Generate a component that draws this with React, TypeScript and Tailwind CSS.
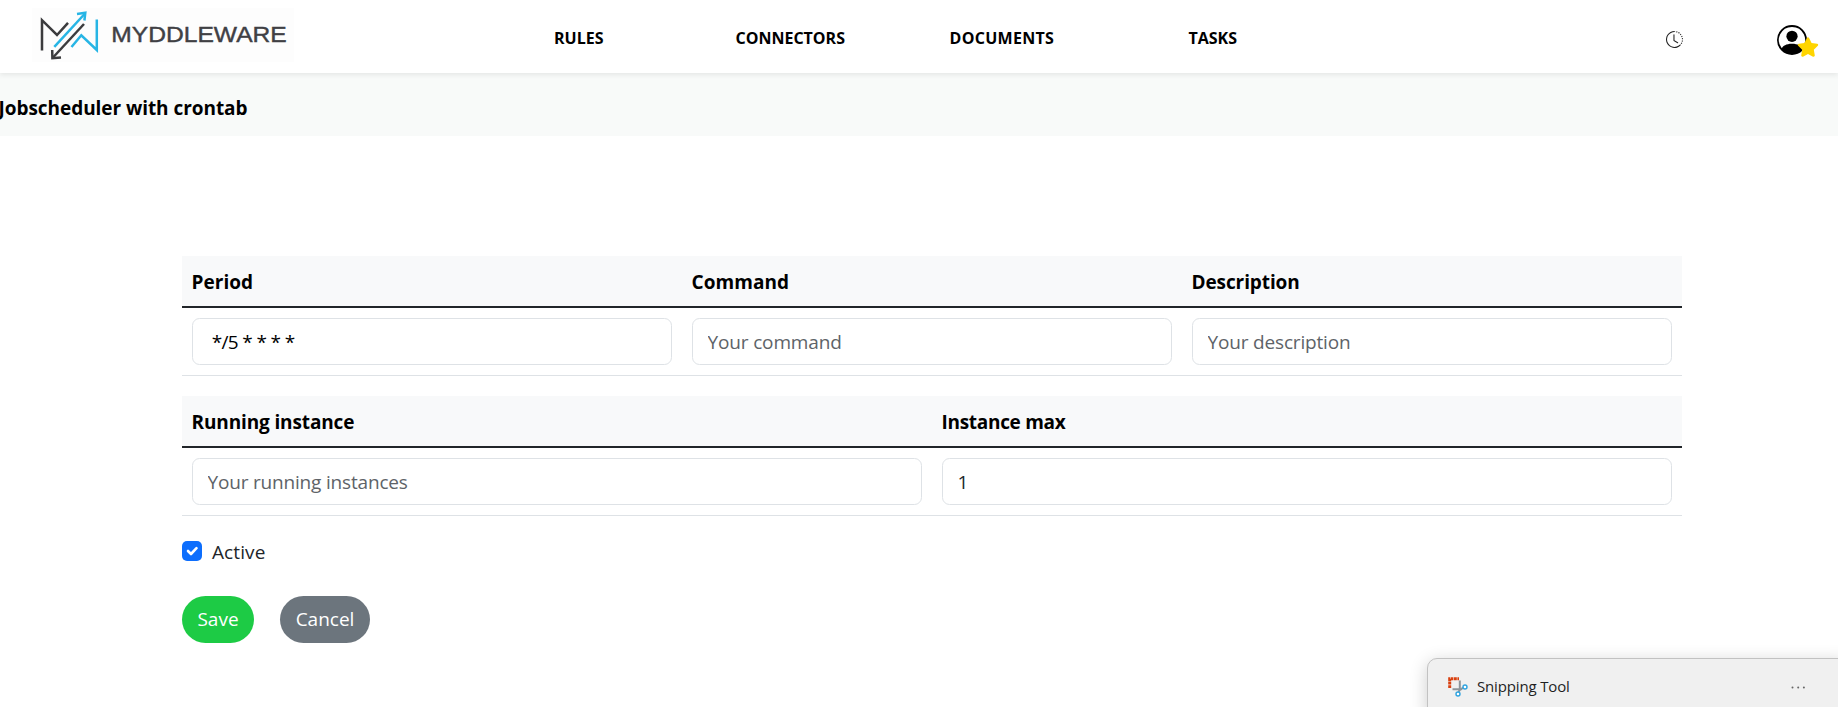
import React from "react";
import { BsClockHistory, BsPersonCircle } from "react-icons/bs";
import { FaStar } from "react-icons/fa";

function Logo() {
  return (
    <svg width="262" height="54" viewBox="32 8 262 54" className="ml-8 mt-2 shrink-0 bg-[#fdfdfd]">
      <g fill="none" strokeWidth="2.5">
        <g stroke="#3c3c3e">
          <path d="M42 50.5V20.2L57 35L68 22.8" />
          <path d="M84 24L53 57.5" />
          <path d="M52.2 50L52.4 58.2L61 57.4" />
        </g>
        <g stroke="#27b5e5">
          <path d="M54.3 46.8L85 13.5" />
          <path d="M77 14L85.3 12.8L84.4 20.5" />
          <path d="M71.5 47L81.3 35.3L96.8 50V19.5" />
        </g>
      </g>
      <text
        x="111.3"
        y="41.6"
        textLength="175.5"
        lengthAdjust="spacingAndGlyphs"
        strokeWidth="0.4"
        className="fill-[#404044] stroke-[#404044] font-['Liberation_Sans',sans-serif] text-[21.5px]"
      >
        MYDDLEWARE
      </text>
    </svg>
  );
}

function SnipIcon() {
  return (
    <svg width="20" height="20" viewBox="0 0 20 20" className="shrink-0">
      <path d="M11.8 3.5v9.7L10.4 15M4.5 12.2h8.7L15 10.6" stroke="#8d9499" strokeWidth="2" fill="none" />
      <path d="M1.7 11V1.7H11" stroke="#d9400f" strokeWidth="3" strokeDasharray="2.8 .6" fill="none" />
      <circle cx="17" cy="10" r="2" fill="#fff" stroke="#2ea3e0" strokeWidth="1.4" />
      <circle cx="10" cy="17" r="2" fill="#fff" stroke="#2ea3e0" strokeWidth="1.4" />
    </svg>
  );
}

type Column = {
  label: string;
  labelClass: string;
  inputClass: string;
  placeholder?: string;
  value?: string;
};

function FieldTable({ columns, gridClass }: { columns: Column[]; gridClass: string }) {
  return (
    <div className="border-b border-[#dee2e6]">
      <div className={`grid h-[52px] border-b-2 border-[#212529] bg-[#f8f9fa] ${gridClass}`}>
        {columns.map((c) => (
          <div key={c.label} className={`pr-2.5 pl-[9.5px] pt-px font-bold leading-[50px] text-black ${c.labelClass}`}>
            {c.label}
          </div>
        ))}
      </div>
      <div className={`grid ${gridClass}`}>
        {columns.map((c) => (
          <div key={c.label} className="p-2.5">
            <input
              className={`block h-[47px] w-full rounded-[7.5px] border border-[#dee2e6] bg-white px-[14.5px] text-[#212529] outline-none placeholder:text-[#5e6368] ${c.inputClass}`}
              placeholder={c.placeholder}
              defaultValue={c.value}
            />
          </div>
        ))}
      </div>
    </div>
  );
}

export default function App() {
  return (
    <div className="relative h-[707px] overflow-hidden bg-white font-['Open_Sans',sans-serif] text-[19px] text-[#212529]">
      <header className="relative z-10 flex h-[73px] bg-white shadow-[0_2px_5px_rgba(0,0,0,0.08)]">
        <Logo />
        <nav className="flex items-center pt-[3px] pl-[260px] text-base font-bold text-black">
          <a className="w-[181.5px]">RULES</a>
          <a className="w-[214px]">CONNECTORS</a>
          <a className="w-[239px] tracking-[0.3px]">DOCUMENTS</a>
          <a className="w-[60px]">TASKS</a>
        </nav>
        <div className="ml-auto flex items-start pr-[19px] text-black">
          <BsClockHistory className="mt-[31px] mr-[94px] size-[17px] text-[#222]" />
          <div className="relative mt-[25px] mr-3 size-[30px]">
            <BsPersonCircle className="size-[30px]" />
            <FaStar className="absolute top-[11px] left-[20px] size-[22px] text-[#ffd500]" />
          </div>
        </div>
      </header>

      <div className="h-[63px] bg-[#f8faf9] pt-[5px]">
        <h1 className="-ml-[1.5px] font-bold leading-[60px] tracking-[-0.05px] text-black">Jobscheduler with crontab</h1>
      </div>

      <main className="ml-[182px] w-[1500px] pt-[120px]">
        <FieldTable
          gridClass="grid-cols-3"
          columns={[
            { label: "Period", labelClass: "tracking-[0.05px]", value: " */5 * * * *", inputClass: "whitespace-pre tracking-[-0.7px] [word-spacing:0.1px] text-black" },
            { label: "Command", labelClass: "tracking-[0.05px]", placeholder: "Your command", inputClass: "tracking-[-0.15px]" },
            { label: "Description", labelClass: "tracking-[-0.1px]", placeholder: "Your description", inputClass: "tracking-[-0.17px]" },
          ]}
        />
        <div className="h-5" />
        <FieldTable
          gridClass="grid-cols-2"
          columns={[
            { label: "Running instance", labelClass: "tracking-[-0.13px]", placeholder: "Your running instances", inputClass: "tracking-[-0.18px]" },
            { label: "Instance max", labelClass: "tracking-[-0.3px]", value: "1", inputClass: "" },
          ]}
        />

        <label className="mt-5 flex h-[30px] items-center gap-2.5 tracking-[0.1px]">
          <span className="flex size-5 items-center justify-center rounded-[5px] bg-[#0d6efd]">
            <svg width="20" height="20" viewBox="0 0 20 20">
              <path d="m6 10 3 3 5.5-5.8" fill="none" stroke="#fff" strokeWidth="2.6" strokeLinecap="round" strokeLinejoin="round" />
            </svg>
          </span>
          <span className="pt-0.5">Active</span>
        </label>

        <div className="mt-[30px] flex gap-[26px] text-white">
          <button className="h-[47px] w-[72px] rounded-full bg-[#1dcb45]">Save</button>
          <button className="h-[47px] w-[90px] rounded-full bg-[#6c757d]">Cancel</button>
        </div>
      </main>

      <div className="absolute top-[658px] left-[1427px] flex h-[60px] w-[420px] items-start rounded-tl-[10px] border border-[#c2c2c2] bg-[#f0f0f0] shadow-[0_4px_18px_rgba(0,0,0,0.2)]">
        <div className="mt-[18px] ml-5">
          <SnipIcon />
        </div>
        <span className="mt-4 ml-[9px] text-[15px] leading-[22px] tracking-[-0.15px] text-[#1f1f1f]">Snipping Tool</span>
        <svg width="15" height="3" viewBox="0 0 15 3" className="mt-[27px] ml-[221px]" fill="#666">
          <circle cx="1.5" cy="1.5" r="1" />
          <circle cx="7.2" cy="1.5" r="1" />
          <circle cx="12.9" cy="1.5" r="1" />
        </svg>
      </div>
    </div>
  );
}
